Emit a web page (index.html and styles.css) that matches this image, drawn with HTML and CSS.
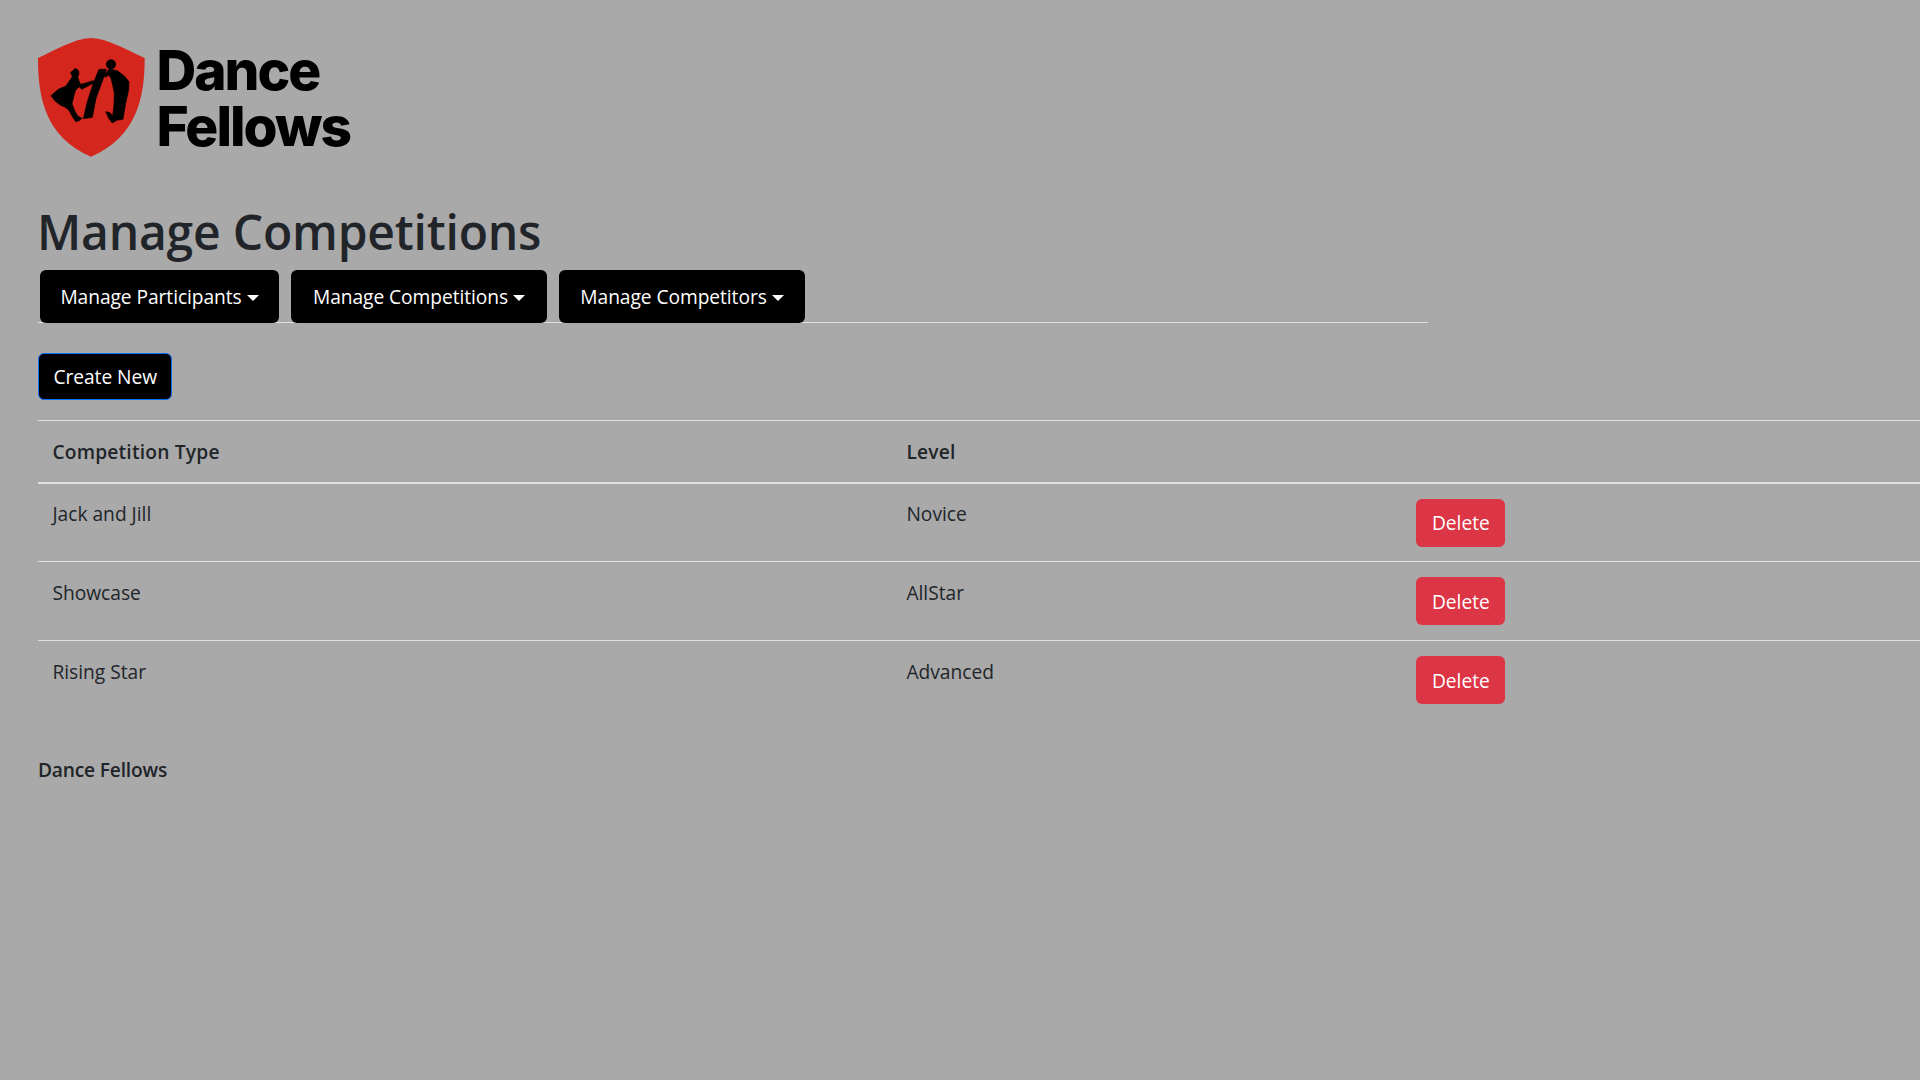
FILE: index.html
```html
<!DOCTYPE html>
<html lang="en">
<head>
<meta charset="utf-8">
<title>Manage Competitions - Dance Fellows</title>
<link rel="stylesheet" href="styles.css">
</head>
<body>
<div class="page">
  <header class="brand">
    <svg class="shield" viewBox="0 0 375 390" aria-hidden="true">
      <path class="shield-red" d="M183 24C130 26 75 62 24 84C24 200 44 320 183 380C322 320 344 200 344 84C292 62 236 26 183 24Z"/>
      <g class="dancers">
        <circle cx="243" cy="103" r="14"/>
        <path d="M222 134L238 117L262 122L283 138L297 155L296 180L286 225L279 268L262 270L247 279L238 268L227 245L240 248L248 258L252 225L253 190L248 165L243 145L236 135L226 142Z"/>
        <path d="M207 118L229 118L222 140L198 205L187 262L160 266L172 215L190 160Z"/>
        <path d="M122 127L129 122L135 115L145 121L147 132L143 141L149 158L153 163L190 152L193 158L155 178L148 170L137 180L131 200L126 222L134 242L143 258L156 265L150 271L137 275L130 264L116 240L106 232L92 226L76 214L63 197L85 178L108 168L120 150L127 140Z"/>
      </g>
    </svg>
    <div class="wordmark">Dance<br>Fellows</div>
  </header>
  <h1 class="title">Manage Competitions</h1>
  <nav class="menu">
    <button class="menu-btn m1">Manage Participants<span class="caret"></span></button>
    <button class="menu-btn m2">Manage Competitions<span class="caret"></span></button>
    <button class="menu-btn m3">Manage Competitors<span class="caret"></span></button>
  </nav>
  <button class="create">Create New</button>
  <table class="grid">
    <colgroup><col class="c1"><col class="c2"><col></colgroup>
    <thead>
      <tr><th>Competition Type</th><th>Level</th><th></th></tr>
    </thead>
    <tbody>
      <tr><td>Jack and Jill</td><td>Novice</td><td class="act"><button class="del">Delete</button></td></tr>
      <tr><td>Showcase</td><td>AllStar</td><td class="act"><button class="del">Delete</button></td></tr>
      <tr><td>Rising Star</td><td>Advanced</td><td class="act"><button class="del">Delete</button></td></tr>
    </tbody>
  </table>
  <footer class="foot">Dance Fellows</footer>
</div>
</body>
</html>
```
FILE: styles.css
```css
html, body { margin: 0; height: 100%; overflow: hidden; background: #a9a9a9; }
body { font-family: "Open Sans", "Noto Sans", sans-serif; font-size: 19.2px; line-height: 28.8px; color: #212529; }
.page { padding: 38px 0 0 38px; }
.brand { display: flex; align-items: flex-start; height: 119px; }
.shield { width: 125px; height: 130px; margin: -8px 0 0 -8px; flex: none; }
.shield-red { fill: #d4261c; }
.dancers { fill: #000; stroke: #000; stroke-width: 2; stroke-linejoin: round; }
.wordmark { margin: 4px 0 0 1.5px; font-family: Inter, sans-serif; font-weight: 800; font-size: 55px; line-height: 56px; letter-spacing: -2px; color: #000; }
.title { margin: 37px 0 0 -1px; font-size: 48px; line-height: 76px; font-weight: 600; letter-spacing: -0.2px; }
.menu { width: 1390px; height: 53px; display: flex; gap: 12px; padding-left: 2px; box-sizing: border-box; border-bottom: 1px solid #dee2e6; }
.menu-btn { height: 53px; border: 0; border-radius: 6px; background: #000; color: #fff; font: inherit; letter-spacing: -0.06px; padding: 1px 0 0; white-space: nowrap; }
.m1 { width: 239px; }
.m2 { width: 256px; }
.m3 { width: 246px; }
.caret { display: inline-block; margin-left: 4.9px; vertical-align: 3px; border-top: 6.2px solid #fff; border-left: 6.2px solid transparent; border-right: 6.2px solid transparent; }
.create { display: block; margin-top: 30px; height: 47px; padding: 2px 14.5px 0; border: 1px solid #0d6efd; border-radius: 6px; background: #000; color: #fff; font: inherit; letter-spacing: -0.06px; }
.grid { margin-top: 20px; width: 1882px; table-layout: fixed; border-collapse: collapse; }
.c1 { width: 854px; }
.c2 { width: 510px; }
.grid th { height: 62px; padding: 3px 14.4px 0; text-align: left; font-weight: 600; letter-spacing: 0.2px; border-top: 1px solid #dee2e6; border-bottom: 2px solid #dee2e6; box-sizing: border-box; }
.grid td { height: 79px; box-sizing: border-box; padding: 16.5px 14.4px 0; vertical-align: top; }
.grid td.act { padding-top: 15px; }
.grid tbody tr + tr td { border-top: 1px solid #dee2e6; }
.del { display: block; width: 89px; height: 48px; padding: 2px 0 0; border: 0; border-radius: 6px; background: #dc3545; color: #fff; font: inherit; }
.foot { margin-top: 36px; font-weight: 600; letter-spacing: -0.2px; }
```
